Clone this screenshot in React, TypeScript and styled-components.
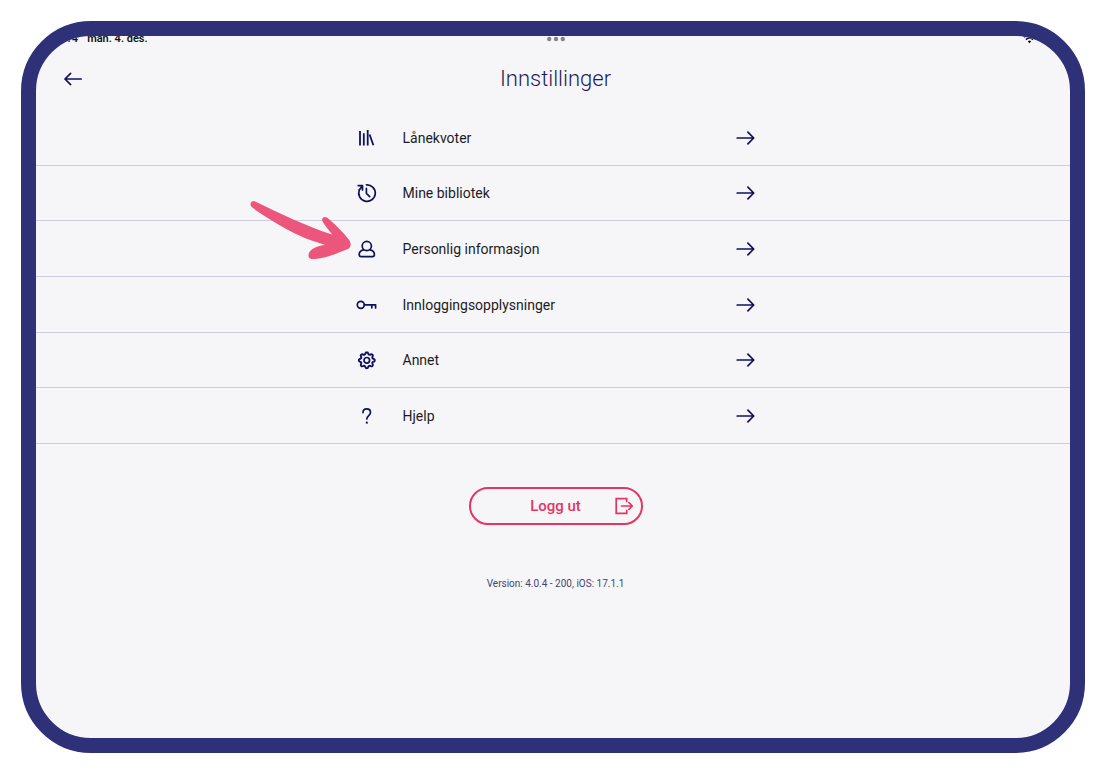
import React from "react";
import styled, { createGlobalStyle } from "styled-components";

const navy = "#10105c";
const crimson = "#e63462";

const GlobalStyle = createGlobalStyle`
  *, *::before, *::after { box-sizing: border-box; }
  body {
    margin: 0;
    background: #fff;
    font-family: Roboto, "Liberation Sans", sans-serif;
  }
  #root { display: flow-root; }
`;

const Tablet = styled.div`
  display: flex;
  flex-direction: column;
  min-height: calc(100vh - 42px);
  margin: 21px;
  border: 15px solid #2e3178;
  border-radius: 70px;
  background: #f6f6f9;
  overflow: hidden;
`;

const StatusBar = styled.div`
  display: grid;
  grid-template-columns: 1fr auto 1fr;
  align-items: center;
  height: 14px;
  margin-top: -4px;
  padding: 0 34px 0 14px;
  color: #111;
  font: 600 11px/14px Roboto, "Liberation Sans", sans-serif;
`;

const Clock = styled.div`
  display: flex;
  gap: 9px;
`;

const Handle = styled.svg`
  margin-left: 25px;
`;

const StatusIcons = styled.div`
  display: flex;
  justify-content: flex-end;
`;

const Header = styled.header`
  display: grid;
  grid-template-columns: 80px 1fr 80px;
  align-items: center;
  height: 64px;
  padding: 2px 0 0 5px;
`;

const BackButton = styled.button`
  display: flex;
  width: 32px;
  margin-left: 16px;
  padding: 6px;
  border: 0;
  background: none;
  color: ${navy};
`;

const Title = styled.h1`
  margin: 0;
  color: #1d1d59;
  font-size: 22px;
  font-weight: 300;
  line-height: 28px;
  text-align: center;
`;

const Menu = styled.nav`
  display: grid;
  grid-auto-rows: 1fr;
  min-height: 334px;
`;

const MenuRow = styled.a`
  display: flex;
  justify-content: center;
  padding: 1px 0 0 5px;
  border-bottom: 1px solid #cdcddc;
  color: #1c1c1e;
  text-decoration: none;
`;

const RowContent = styled.span`
  position: relative;
  display: grid;
  grid-template-columns: 22px 1fr 20px;
  column-gap: 25px;
  align-items: center;
  width: 400px;
  font-size: 14px;
  line-height: 20px;

  svg { color: ${navy}; }
`;

const Pointer = styled.svg`
  position: absolute;
  top: -22px;
  left: -106px;
`;

const Footer = styled.footer`
  display: flex;
  flex-direction: column;
  align-items: center;
  gap: 51px;
  padding: 43px 0 43px 5px;
`;

const LogoutButton = styled.button`
  display: grid;
  grid-template-columns: 20px 1fr 20px;
  align-items: center;
  width: 174px;
  height: 38px;
  padding: 0 7px;
  border: 2px solid ${crimson};
  border-radius: 19px;
  background: none;
  color: ${crimson};
  font: 500 15px/20px Roboto, "Liberation Sans", sans-serif;
`;

const LogoutLabel = styled.span`
  grid-column: 2;
`;

const Version = styled.p`
  margin: 0;
  color: #45456f;
  font-size: 10px;
  line-height: 16px;
`;

const Icon = ({ w = 22, h = 22, children }: { w?: number; h?: number; children: React.ReactNode }) => (
  <svg
    width={w}
    height={h}
    viewBox={`0 0 ${w} ${h}`}
    fill="none"
    stroke="currentColor"
    strokeWidth="1.7"
    strokeLinecap="round"
    strokeLinejoin="round"
    aria-hidden="true"
  >
    {children}
  </svg>
);

const ArrowRight = () => (
  <Icon w={20}>
    <path d="M1.2 11h16.5M11.9 5.2 17.7 11l-5.8 5.8" />
  </Icon>
);

const ArrowLeft = () => (
  <Icon w={20} h={20}>
    <path d="M18.2 10H2M7.6 4.4 2 10l5.6 5.6" />
  </Icon>
);

const Books = () => (
  <Icon>
    <path d="M4 4v14.400M7.800 6.200v12.200M11.700 3v15.400M13.600 7.500l3.800 10.700" strokeWidth="1.8" strokeLinecap="butt" />
  </Icon>
);

const History = () => (
  <Icon>
    <path d="M10.5 2.8A8.3 8.3 0 1 1 3.3 8" />
    <path d="M2.2 3.6h4.3v4.4M6.3 3.8 3.3 8M10.4 6.4v5l3.3 3.2" />
  </Icon>
);

const Person = () => (
  <Icon>
    <circle cx="10.8" cy="8" r="4.6" />
    <path d="M7.500 11.800c-2.600.6-4.300 2.200-4.300 4.600 0 1.500.7 2.200 2 2.200h11.200c1.300 0 2-.7 2-2.200 0-2.400-1.700-4-4.300-4.600" />
  </Icon>
);

const Key = () => (
  <Icon>
    <circle cx="4.800" cy="10.800" r="3.500" />
    <path d="M8.300 10.800h11.300v3.200M15.800 10.800v3" />
  </Icon>
);

const gearPath = (() => {
  const points: string[] = [];
  for (let i = 0; i <= 96; i++) {
    const a = (i / 96) * Math.PI * 2;
    const r = 7 + Math.tanh(1.6 * Math.cos(a * 8));
    points.push(`${(10.8 + r * Math.sin(a)).toFixed(2)} ${(11.3 - r * Math.cos(a)).toFixed(2)}`);
  }
  return `M${points.join("L")}Z`;
})();

const Gear = () => (
  <Icon>
    <path d={gearPath} strokeWidth="1.9" />
    <circle cx="10.8" cy="11.3" r="2.8" />
  </Icon>
);

const Question = () => (
  <Icon>
    <path d="M7 7.600c0-2.300 1.500-3.700 3.700-3.700s3.800 1.400 3.800 3.500c0 3-3.700 3.300-3.700 6.600" />
    <circle cx="10.800" cy="17.700" r="1.100" fill="currentColor" stroke="none" />
  </Icon>
);

const Logout = () => (
  <Icon w={20} h={20}>
    <path d="M12.7 6.200V2.600H2.200v14.800h10.500v-3.600" strokeLinejoin="miter" strokeLinecap="butt" />
    <path d="M7.5 10h10.700M15 6.700l3.300 3.300-3.300 3.300" />
  </Icon>
);

const items = [
  { label: "Lånekvoter", icon: <Books /> },
  { label: "Mine bibliotek", icon: <History /> },
  { label: "Personlig informasjon", icon: <Person />, highlighted: true },
  { label: "Innloggingsopplysninger", icon: <Key /> },
  { label: "Annet", icon: <Gear /> },
  { label: "Hjelp", icon: <Question /> },
];

export default function App() {
  return (
    <>
      <GlobalStyle />
      <Tablet>
        <StatusBar>
          <Clock>
            <span>11:14</span>
            <span>man. 4. des.</span>
          </Clock>
          <Handle width="18" height="6" viewBox="0 0 18 6" fill="#858588" aria-hidden="true">
            <circle cx="2.2" cy="3" r="2.2" />
            <circle cx="9" cy="3" r="2.2" />
            <circle cx="15.8" cy="3" r="2.2" />
          </Handle>
          <StatusIcons>
            <svg width="13" height="11" viewBox="0 0 13 11" fill="none" stroke="#111" strokeWidth="1.7" aria-hidden="true">
              <path d="M.8 3.200a8 8 0 0 1 11.400 0M3 5.600a5 5 0 0 1 7 0" />
              <path d="M4.800 7.400 6.500 9.300l1.700-1.900a2.400 2.400 0 0 0-3.400 0Z" fill="#111" stroke="none" />
            </svg>
          </StatusIcons>
        </StatusBar>
        <Header>
          <BackButton type="button" aria-label="Tilbake">
            <ArrowLeft />
          </BackButton>
          <Title>Innstillinger</Title>
        </Header>
        <Menu>
          {items.map(({ label, icon, highlighted }) => (
            <MenuRow key={label} href="#">
              <RowContent>
                {icon}
                <span>{label}</span>
                <ArrowRight />
                {highlighted && (
                  <Pointer width="102" height="60" viewBox="0 0 102 60" aria-hidden="true">
                    <path
                      fill="#ec567c"
                      d="M4 1C1 1-.6 4.200 1.300 6.600 5 10.500 24 22 42 32c12 6.500 24 10 33 13-7 .5-16 4-16.500 10-.3 4 3 4.300 7 4C76 58 88 53 98 49c3-1.500 3.500-5.500 1.500-8.500C93 32 84 23 77 17.500c-3-1.800-6 .8-4.500 4C75 26 79 30 82 34.500 56 26 31 14 4 1Z"
                    />
                  </Pointer>
                )}
              </RowContent>
            </MenuRow>
          ))}
        </Menu>
        <Footer>
          <LogoutButton type="button">
            <LogoutLabel>Logg ut</LogoutLabel>
            <Logout />
          </LogoutButton>
          <Version>Version: 4.0.4 - 200, iOS: 17.1.1</Version>
        </Footer>
      </Tablet>
    </>
  );
}
